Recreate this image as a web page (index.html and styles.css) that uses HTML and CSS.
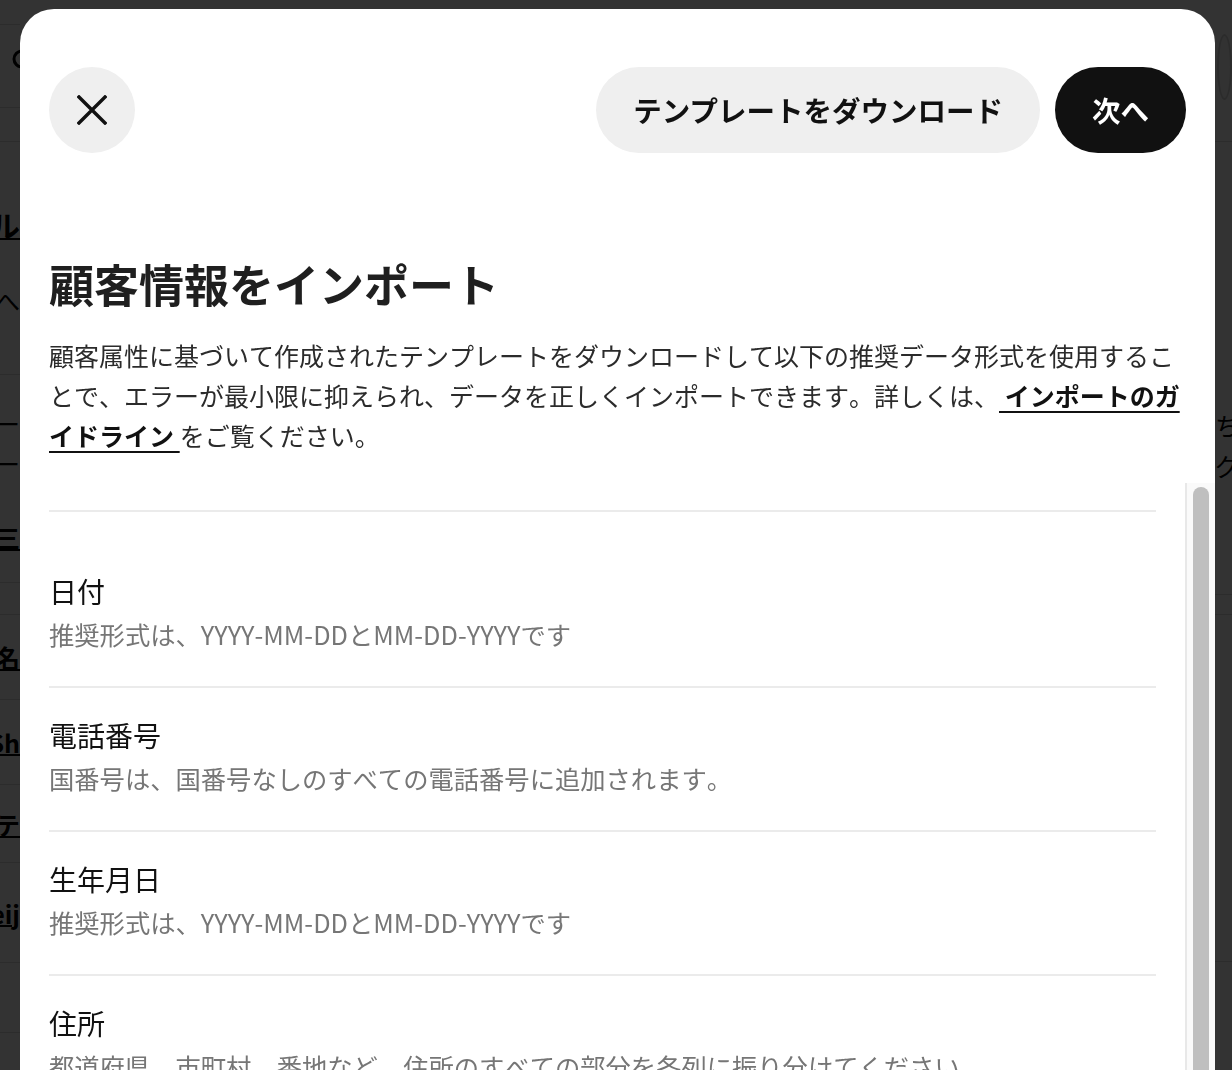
FILE: index.html
```html
<!DOCTYPE html>
<html lang="ja">
<head>
<meta charset="utf-8">
<title>顧客情報をインポート</title>
<link rel="stylesheet" href="styles.css">
</head>
<body>
<div class="page">
  <div class="page-left">
    <div class="bg-row h24"></div>
    <div class="bg-row h83"><svg class="bg-search" width="26" height="26" viewBox="0 0 26 26"><circle cx="10" cy="10" r="8" fill="none" stroke="#000" stroke-width="3"/><path d="M16 16 L23 23" stroke="#000" stroke-width="3"/></svg></div>
    <div class="bg-row h34"></div>
    <div class="bg-row h233 stack s1">
      <span class="bg-title">データツル</span>
      <span class="bg-text gap43">ページへ</span>
    </div>
    <div class="bg-row h208 stack s2">
      <span class="bg-text">ー</span>
      <span class="bg-text gap10">ー</span>
      <span class="bg-link gap44">コード三</span>
    </div>
    <div class="bg-row h32"></div>
    <div class="bg-row h85"><span class="bg-link">氏名</span></div>
    <div class="bg-row h85"><span class="bg-link">Sh</span></div>
    <div class="bg-row h78"><span class="bg-link">テ</span></div>
    <div class="bg-row h100"><span class="bg-link">Meij</span></div>
    <div class="bg-row h70"></div>
    <div class="bg-row h100"></div>
  </div>
  <div class="page-right">
    <div class="bg-row r-top"><span class="bg-avatar"></span></div>
    <div class="bg-row r-mid">
      <span class="bg-text">ちょう</span>
      <span class="bg-text gap10">グループ</span>
    </div>
    <div class="bg-row h20"></div>
    <div class="bg-row h347"></div>
    <div class="bg-row h120"></div>
  </div>
</div>

<div class="backdrop"></div>

<div class="modal" role="dialog" aria-labelledby="modal-title">
  <div class="modal-header">
    <button class="icon-btn" type="button" aria-label="閉じる">
      <svg width="30" height="30" viewBox="0 0 30 30"><path d="M2 2 L28 28 M28 2 L2 28" stroke="#111" stroke-width="3.4" stroke-linecap="square"/></svg>
    </button>
    <div class="actions">
      <button class="btn btn-secondary" type="button">テンプレートをダウンロード</button>
      <button class="btn btn-primary" type="button">次へ</button>
    </div>
  </div>

  <h1 class="title" id="modal-title">顧客情報をインポート</h1>
  <p class="intro">顧客属性に基づいて作成されたテンプレートをダウンロードして以下の推奨データ形式を使用することで、エラーが最小限に抑えられ、データを正しくインポートできます。詳しくは、<a class="guide-link" href="#"> インポートのガイドライン </a>をご覧ください。</p>

  <div class="list">
    <div class="list-content">
      <div class="list-inner">
        <div class="item first">
          <div class="label">日付</div>
          <div class="desc">推奨形式は、YYYY-MM-DDとMM-DD-YYYYです</div>
        </div>
        <div class="item">
          <div class="label">電話番号</div>
          <div class="desc">国番号は、国番号なしのすべての電話番号に追加されます。</div>
        </div>
        <div class="item">
          <div class="label">生年月日</div>
          <div class="desc">推奨形式は、YYYY-MM-DDとMM-DD-YYYYです</div>
        </div>
        <div class="item">
          <div class="label">住所</div>
          <div class="desc">都道府県、市町村、番地など、住所のすべての部分を各列に振り分けてください。</div>
        </div>
        <div class="item">
          <div class="label">メールアドレス</div>
          <div class="desc">有効なメールアドレスを入力してください。</div>
        </div>
      </div>
    </div>
    <div class="scroll-rail" aria-hidden="true"><div class="scroll-thumb"></div></div>
  </div>
</div>
</body>
</html>
```
FILE: styles.css
```css
* {
  box-sizing: border-box;
}

html,
body {
  margin: 0;
  height: 100%;
  overflow: hidden;
}

body {
  font-family: "Noto Sans CJK JP", "Noto Sans", sans-serif;
  font-kerning: none;
  text-spacing-trim: space-all;
  background: #ffffff;
  color: #111111;
}

/* ---------- background page (behind the dialog) ---------- */
.page {
  display: flex;
  justify-content: space-between;
  height: 1070px;
}

.page-left {
  width: 20px;
  overflow: hidden;
  display: flex;
  flex-direction: column;
}

.page-right {
  width: 17px;
  overflow: hidden;
  display: flex;
  flex-direction: column;
}

.bg-row {
  flex-shrink: 0;
  display: flex;
  align-items: center;
  justify-content: flex-end;
  white-space: nowrap;
  border-bottom: 1px solid #dddddd;
  font-size: 25px;
  line-height: 30px;
  color: #000000;
}

.bg-row.stack {
  flex-direction: column;
  align-items: flex-end;
  justify-content: flex-start;
}

.s1 { padding-top: 64px; }
.s2 { padding-top: 33px; }
.gap10 { margin-top: 10px; }
.gap43 { margin-top: 43px; }
.gap44 { margin-top: 44px; }

.page-right .bg-row {
  justify-content: flex-start;
}

.h20 { height: 20px; }
.h24 { height: 25px; }
.h32 { height: 32px; }
.h34 { height: 34px; }
.h70 { height: 70px; }
.h78 { height: 78px; }
.h83 { height: 83px; }
.h85 { height: 85px; }
.h100 { height: 100px; }
.h120 { height: 120px; }
.h208 { height: 208px; }
.h233 { height: 233px; }
.h347 { height: 347px; }

.r-top {
  height: 142px;
  align-items: flex-start;
  padding-top: 34px;
}

.page-right .r-mid {
  height: 453px;
  flex-direction: column;
  align-items: flex-start;
  justify-content: flex-start;
  padding-top: 268px;
}

.bg-search {
  margin-right: -18px;
  margin-top: -8px;
}

.bg-title {
  font-weight: 700;
  font-size: 30px;
  line-height: 36px;
  text-decoration: underline;
  text-decoration-thickness: 2px;
}

.bg-text {
  font-size: 25px;
}

.bg-link {
  font-weight: 700;
  font-size: 25px;
  text-decoration: underline;
  text-decoration-thickness: 2px;
}

.bg-avatar {
  display: block;
  width: 66px;
  height: 66px;
  border-radius: 50%;
  border: 2px solid #d6d6d6;
  background: #f7f7f7;
  margin-left: 2px;
}

.backdrop {
  position: fixed;
  inset: 0;
  background: rgba(0, 0, 0, 0.8);
}

/* ---------- dialog ---------- */
.modal {
  position: absolute;
  left: 20px;
  top: 9px;
  width: 1195px;
  height: 1200px;
  background: #ffffff;
  border-radius: 34px 34px 0 0;
  padding: 58px 29px 0;
  display: flex;
  flex-direction: column;
}

.modal-header {
  display: flex;
  align-items: center;
  justify-content: space-between;
  flex-shrink: 0;
}

.icon-btn {
  width: 86px;
  height: 86px;
  border: 0;
  border-radius: 50%;
  background: #efefef;
  padding: 0;
  display: flex;
  align-items: center;
  justify-content: center;
  cursor: pointer;
}

.actions {
  display: flex;
  gap: 15px;
}

.btn {
  height: 86px;
  border: 0;
  border-radius: 43px;
  padding: 0 37px;
  font-family: "Noto Sans CJK JP", "Noto Sans", sans-serif;
  font-weight: 700;
  font-size: 28.5px;
  line-height: 1;
  cursor: pointer;
}

.btn-secondary {
  background: #efefef;
  color: #111111;
}

.btn-primary {
  background: #111111;
  color: #ffffff;
}

.title {
  margin: 100px 0 20px;
  font-size: 45px;
  line-height: 62px;
  font-weight: 700;
  color: #1f1f1f;
  flex-shrink: 0;
}

.intro {
  margin: 0;
  font-size: 25px;
  line-height: 40px;
  color: #2b2b2b;
  flex-shrink: 0;
}

.guide-link {
  color: #111111;
  font-weight: 700;
  text-decoration: underline;
  text-decoration-thickness: 2px;
  text-underline-offset: 5px;
}

/* ---------- list with its scroll rail ---------- */
.list {
  display: flex;
  margin: 28px -29px 0 0;
  flex: 1;
  min-height: 0;
  overflow: hidden;
}

.list-content {
  flex: 1;
  min-width: 0;
  margin-right: 29px;
  padding-top: 27px;
}

.scroll-rail {
  width: 30px;
  flex-shrink: 0;
  background: #fafafa;
  border-left: 2px solid #e8e8e8;
  padding: 4px 6px 0 6px;
}

.scroll-thumb {
  width: 16px;
  height: 900px;
  border-radius: 8px;
  background: #bfbfbf;
}

.list-inner {
  border-top: 2px solid #ebebeb;
}

.item {
  padding: 27px 0 32px;
  border-bottom: 2px solid #ebebeb;
}

.item.first {
  padding-top: 59px;
}

.label {
  font-size: 28px;
  line-height: 40px;
  color: #111111;
}

.desc {
  margin-top: 3px;
  font-size: 25.3px;
  line-height: 40px;
  color: #767676;
}
```
